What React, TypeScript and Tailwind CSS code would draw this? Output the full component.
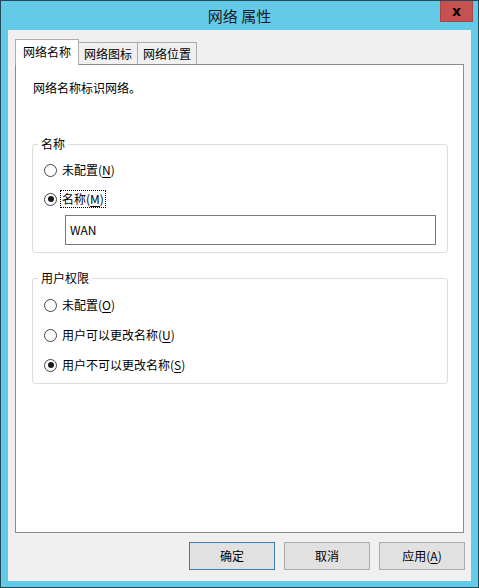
import React from "react";

const FONT = { fontFamily: '"Noto Sans CJK SC", "Noto Sans", sans-serif' };

function Radio({ checked, label, mnemonic, focus = false }: { checked?: boolean; label: string; mnemonic: string; focus?: boolean }) {
  return (
    <div className="flex h-[20px] items-center">
      <div className="flex h-[13px] w-[13px] items-center justify-center rounded-full border border-[#444444] bg-white">
        {checked && <div className="h-[6px] w-[6px] rounded-full bg-[#1a1a1a]" />}
      </div>
      <div className={"ml-[3px] flex h-[18px] items-center px-[1px] text-[12px] leading-[16px] text-[#000] " + (focus ? "border border-dotted border-[#000]" : "border border-transparent")}>
        <span>{label}</span>
        <span>(</span>
        <span className="underline underline-offset-2">{mnemonic}</span>
        <span>)</span>
      </div>
    </div>
  );
}

export default function App() {
  return (
    <div style={FONT} className="flex h-[588px] w-[479px] flex-col border border-[#24495a] bg-[#63cbe8]">
      <div className="relative flex h-[29px] shrink-0 items-center justify-center">
        <span className="text-[15px] leading-[20px] text-[#1b1b1b]">网络 属性</span>
        <div className="absolute right-[5px] top-0 flex h-[21px] w-[33px] items-center justify-center border border-t-0 border-[#a84545] bg-[#c75050]">
          <span className="text-[14px] font-bold leading-none text-[#000]" style={{ fontFamily: '"DejaVu Sans", sans-serif' }}>x</span>
        </div>
      </div>
      <div className="mx-[7px] mb-[6px] flex flex-1 flex-col bg-[#f0f0f0] px-[7px] pt-[9px]">
        <div className="relative z-10 flex h-[25px] items-end">
          <div className="-mb-px flex h-[26px] w-[64px] items-start justify-center border border-b-0 border-[#acacac] bg-white pt-[4px] text-[12px] leading-[16px] text-[#000]">
            网络名称
          </div>
          <div className="-ml-px flex h-[22px] w-[60px] items-center justify-center border border-b-0 border-[#acacac] bg-[#f0f0f0] text-[12px] leading-[16px] text-[#000]">
            网络图标
          </div>
          <div className="-ml-px flex h-[22px] w-[60px] items-center justify-center border border-b-0 border-[#acacac] bg-[#f0f0f0] text-[12px] leading-[16px] text-[#000]">
            网络位置
          </div>
        </div>
        <div className="flex h-[469px] w-[449px] flex-col border border-[#898c95] bg-white pl-[16px] pt-[15px]">
          <div className="pl-[1px] text-[12px] leading-[16px] text-[#000]">网络名称标识网络。</div>
          <div className="relative mt-[48px] flex w-[416px] flex-col rounded-[3px] border border-[#dcdcdc] pb-[7px] pl-[11px] pt-[15px]">
            <div className="absolute -top-[9px] left-[5px] bg-white px-[3px] text-[12px] leading-[16px] text-[#000]">名称</div>
            <Radio label="未配置" mnemonic="N" />
            <div className="mt-[9px]">
              <Radio checked label="名称" mnemonic="M" focus />
            </div>
            <div className="ml-[21px] mt-[6px] flex h-[30px] w-[371px] items-center border border-[#7a7a7a] bg-white pl-[4px] text-[12px] text-[#000]">
              WAN
            </div>
          </div>
          <div className="relative mt-[25px] flex w-[416px] flex-col rounded-[3px] border border-[#dcdcdc] pb-[8px] pl-[11px] pt-[16px]">
            <div className="absolute -top-[9px] left-[5px] bg-white px-[3px] text-[12px] leading-[16px] text-[#000]">用户权限</div>
            <Radio label="未配置" mnemonic="O" />
            <div className="mt-[10px]">
              <Radio label="用户可以更改名称" mnemonic="U" />
            </div>
            <div className="mt-[10px]">
              <Radio checked label="用户不可以更改名称" mnemonic="S" />
            </div>
          </div>
        </div>
        <div className="-mr-px mt-[9px] flex justify-end gap-[9px]">
          <button className="flex h-[28px] w-[86px] items-center justify-center border border-[#3c7fb1] bg-[#e1e1e1] text-[12px] text-[#000]">确定</button>
          <button className="flex h-[28px] w-[86px] items-center justify-center border border-[#adadad] bg-[#e1e1e1] text-[12px] text-[#000]">取消</button>
          <button className="flex h-[28px] w-[86px] items-center justify-center border border-[#adadad] bg-[#e1e1e1] text-[12px] text-[#000]">
            应用(<span className="underline underline-offset-2">A</span>)
          </button>
        </div>
      </div>
    </div>
  );
}
